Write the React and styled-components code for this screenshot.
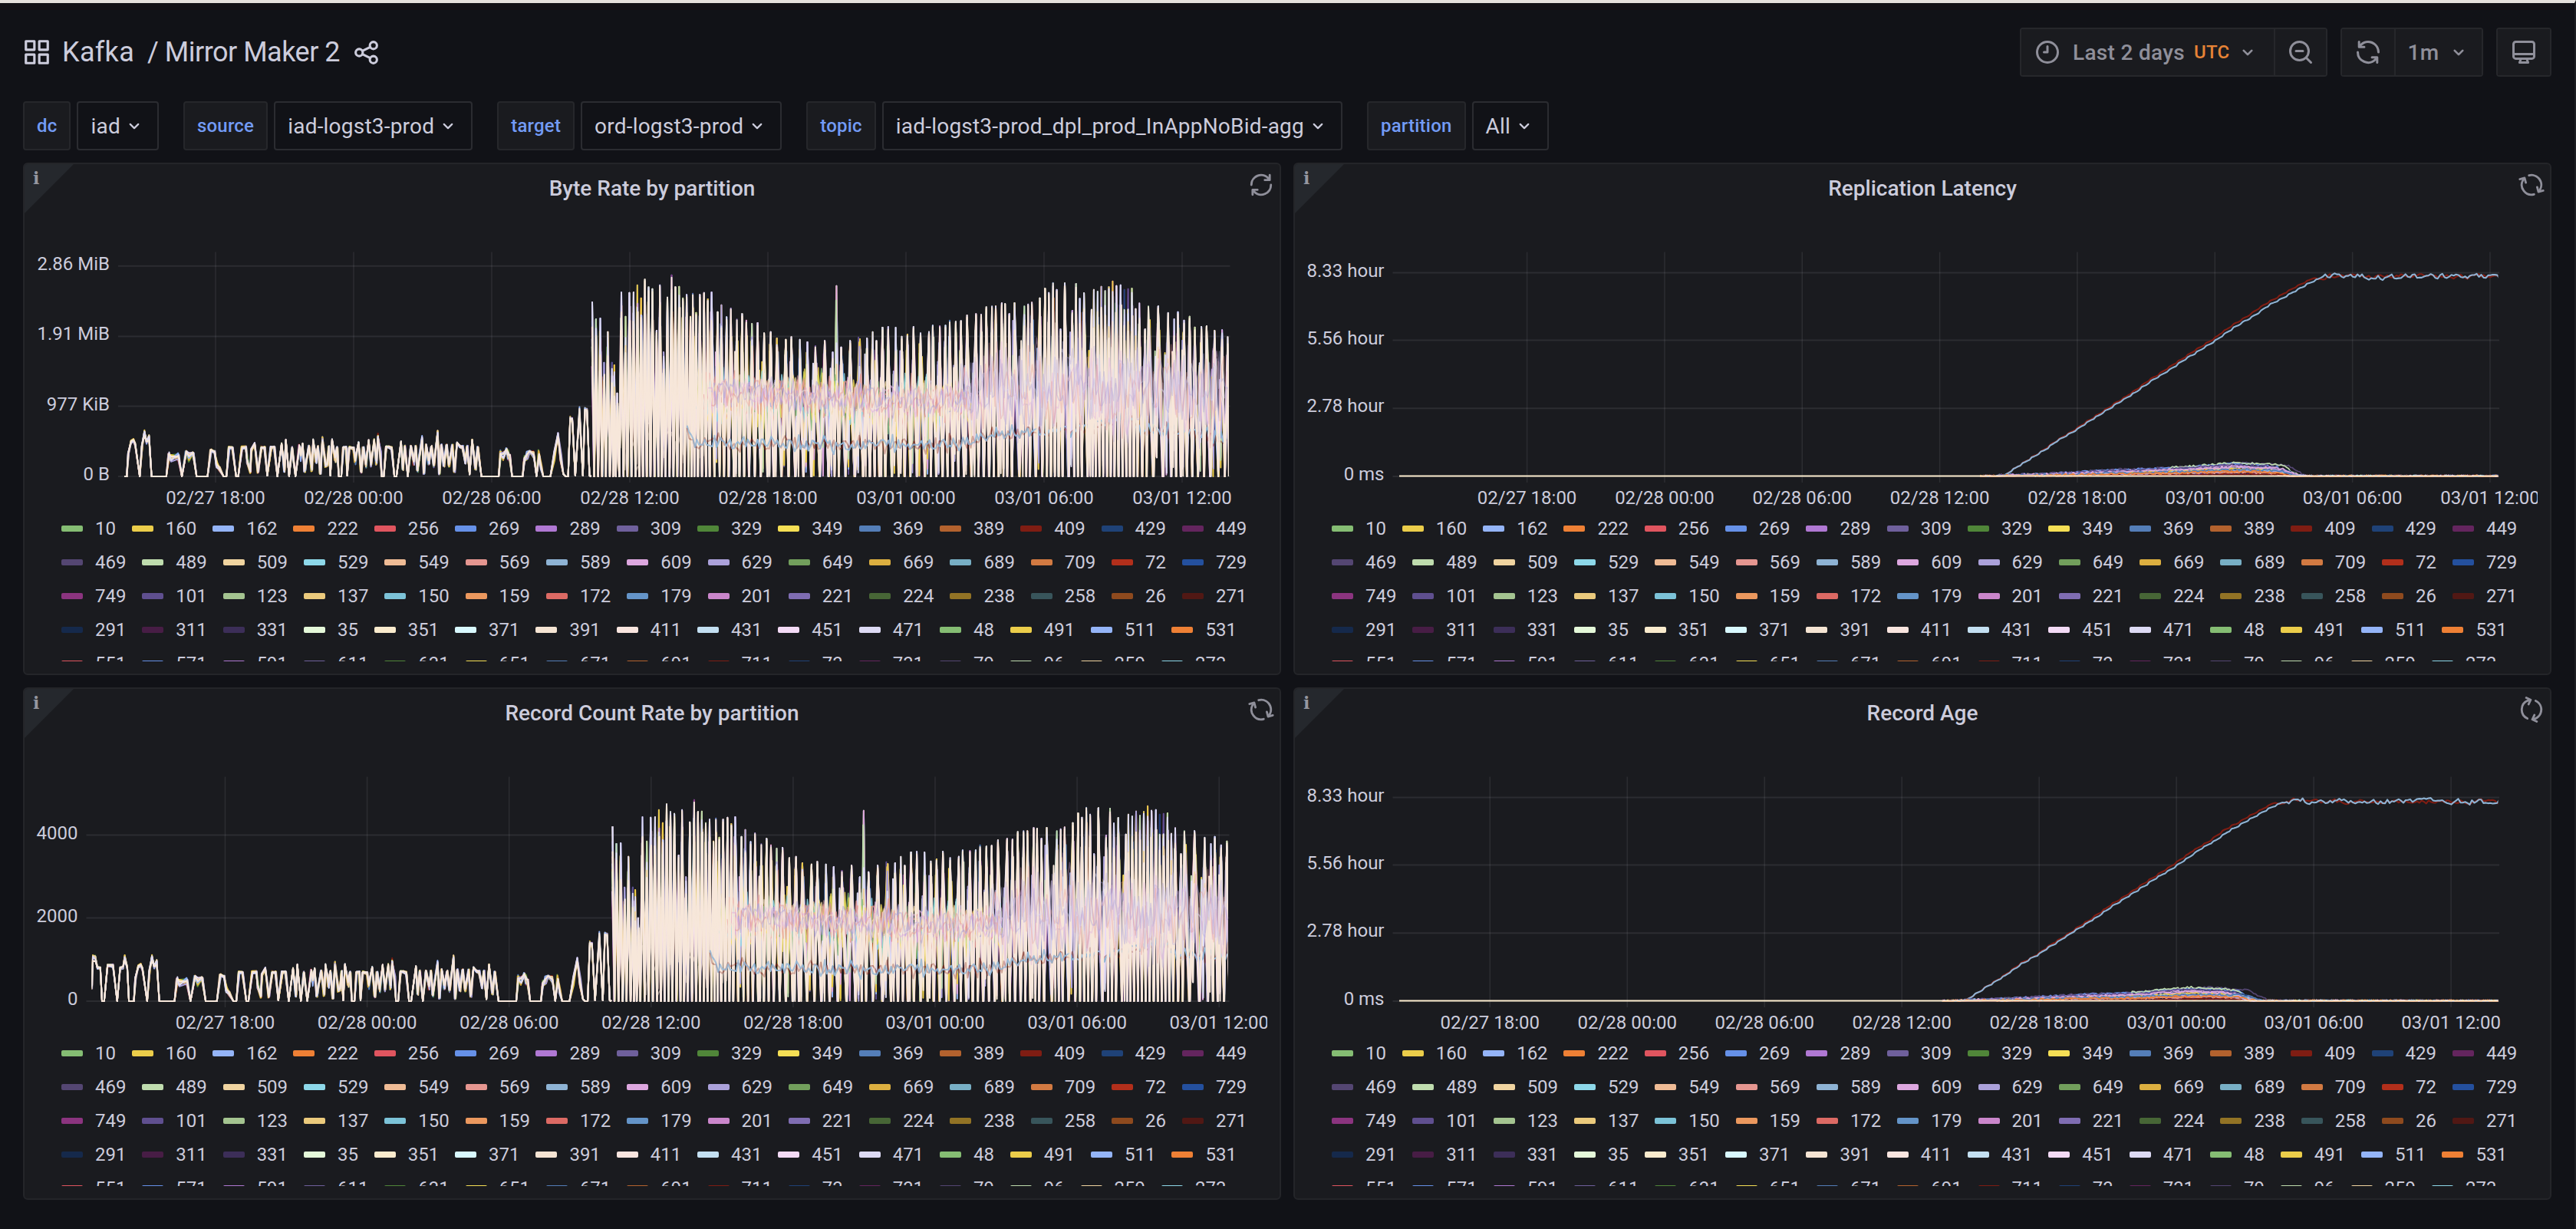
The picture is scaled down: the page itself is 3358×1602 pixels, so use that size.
import React from "react";
import styled, { createGlobalStyle, css } from "styled-components";

const GlobalStyle = createGlobalStyle`
  * { box-sizing: border-box; }
  body {
    margin: 0;
    background: #111217;
    color: #ccccdc;
    font-family: Roboto, "Liberation Sans", sans-serif;
    -webkit-font-smoothing: antialiased;
  }
`;

/* ---------- layout ---------- */

const Page = styled.div`
  width: 3358px;
  height: 1602px;
  overflow: hidden;
  background: #111217;
  border-top: 4px solid #e4e2de;
  border-right: 2px solid #1d1e22;
  padding: 32px 30px 0;
`;

const NavBar = styled.header`
  display: flex;
  align-items: center;
  justify-content: space-between;
  height: 64px;
`;

const Title = styled.h1`
  display: flex;
  align-items: center;
  margin: 0 0 0 -1px;
  font-size: 36px;
  font-weight: 400;
  line-height: 64px;
  white-space: pre;
  color: #ccccdc;
`;

const Crumb = styled.span`
  margin-left: ${(p) => p.$gap}px;
  letter-spacing: ${(p) => p.$track}px;
`;

const Toolbar = styled.div`
  display: flex;
  gap: 17px;
`;

const ButtonGroup = styled.div`
  display: flex;
  border: 2px solid #26272b;
  border-radius: 4px;
  overflow: hidden;
`;

const ToolButton = styled.button`
  display: flex;
  align-items: center;
  justify-content: ${(p) => (p.$start ? "flex-start" : "center")};
  width: ${(p) => p.$width}px;
  height: 60px;
  padding: ${(p) => (p.$start ? "0 0 0 16px" : "0")};
  border: 0;
  background: #1a1b1f;
  color: #8f8f9a;
  font: 500 28px Roboto, "Liberation Sans", sans-serif;
  letter-spacing: 0.3px;
  & + & {
    border-left: 2px solid #26272b;
  }
`;

const RangeText = styled.span`
  margin-left: 15px;
`;

const Zone = styled.span`
  margin: 0 10px 0 12px;
  font-size: 24px;
  color: #e68336;
`;

const IntervalText = styled.span`
  margin-right: 12px;
`;

const Variables = styled.div`
  display: flex;
  gap: 32px;
  margin: 32px 0 16px;
  letter-spacing: 0.21px;
`;

const Variable = styled.div`
  display: flex;
  gap: 8px;
`;

const VarLabel = styled.label`
  display: flex;
  align-items: center;
  height: 64px;
  padding: 0 16px;
  border: 2px solid #26272b;
  border-radius: 4px;
  background: #1a1b1f;
  color: #739bf5;
  font-size: 24px;
  font-weight: 500;
`;

const VarValue = styled.div`
  display: flex;
  align-items: center;
  gap: 4px;
  height: 64px;
  padding: 0 16px;
  border: 2px solid #2b2c31;
  border-radius: 4px;
  font-size: 28px;
`;

const Grid = styled.main`
  display: grid;
  grid-template-columns: 1640px 1640px;
  grid-auto-rows: 668px;
  gap: 16px;
`;

const PanelBox = styled.section`
  position: relative;
  display: flex;
  flex-direction: column;
  background: #1a1b1f;
  border: 2px solid #242529;
  border-radius: 6px;
  overflow: hidden;
`;

const PanelTitle = styled.h2`
  margin: 0;
  height: 58px;
  line-height: 63px;
  text-align: center;
  font-size: 28px;
  font-weight: 500;
  color: #ccccdc;
`;

const InfoCorner = styled.div`
  position: absolute;
  top: 0;
  left: 0;
  width: 64px;
  height: 64px;
  background: #25282d;
  clip-path: polygon(0 0, 100% 0, 0 100%);
`;

const InfoMark = styled.span`
  position: absolute;
  top: 5px;
  left: 11px;
  font: 700 22px/26px "DejaVu Serif", serif;
  color: #9697a0;
`;

const Spinner = styled.div`
  position: absolute;
  top: 10px;
  right: 7px;
  width: 34px;
  height: 34px;
  color: #8f8f9a;
  ${(p) => css`
    transform: rotate(${p.$angle}deg);
  `}
`;

const Plot = styled.svg`
  display: block;
  flex: none;
  margin-left: 14px;
  width: 1606px;
  height: 395px;
  overflow: hidden;
`;

const Legend = styled.ul`
  display: flex;
  flex-wrap: wrap;
  align-content: flex-start;
  margin: 0;
  padding: 0 0 0 48px;
  width: 1625px;
  height: 195px;
  overflow: hidden;
  list-style: none;
`;

const LegendItem = styled.li`
  display: flex;
  align-items: center;
  height: 44px;
  padding-right: 20.85px;
  gap: 16px;
  font-size: 24px;
  line-height: 44px;
`;

const Swatch = styled.span`
  width: 28px;
  height: 8px;
  border-radius: 2px;
  background: ${(p) => p.$color};
`;

const Svg = styled.svg`
  display: block;
  flex: none;
  fill: none;
  stroke: currentColor;
  stroke-width: ${(p) => p.$weight || 2};
  margin-left: ${(p) => p.$gap || 0}px;
  stroke-linecap: round;
  stroke-linejoin: round;
`;

/* ---------- icons ---------- */

const Icon = ({ size = 36, weight, gap, children }) => (
  <Svg width={size} height={size} viewBox="0 0 24 24" $weight={weight} $gap={gap}>
    {children}
  </Svg>
);

const AppsIcon = () => (
  <Icon size={38}>
    <rect x="3" y="3" width="7" height="7" />
    <rect x="14" y="3" width="7" height="7" />
    <rect x="3" y="14" width="7" height="7" />
    <rect x="14" y="14" width="7" height="7" />
  </Icon>
);

const ShareIcon = () => (
  <Icon size={37} gap={16}>
    <circle cx="18" cy="6" r="3" />
    <circle cx="18" cy="18" r="3" />
    <circle cx="6" cy="12" r="3" />
    <path d="M8.7 10.6l6.6-3.2M8.7 13.4l6.6 3.2" />
  </Icon>
);

const ClockIcon = () => (
  <Icon>
    <circle cx="12" cy="12" r="9" />
    <path d="M12 7v5H9" />
  </Icon>
);

const ZoomOutIcon = () => (
  <Icon>
    <circle cx="11" cy="11" r="8" />
    <path d="M17 17l4 4M8 11h6" />
  </Icon>
);

const SYNC_PATH =
  "M19.91,15.51H15.38a1,1,0,0,0,0,2h2.4A8,8,0,0,1,4,12a1,1,0,0,0-2,0,10,10,0,0,0,16.88,7.23V21a1,1,0,0,0,2,0V16.5A1,1,0,0,0,19.91,15.51ZM12,2A10,10,0,0,0,5.12,4.77V3a1,1,0,0,0-2,0V7.5a1,1,0,0,0,1,1h4.5a1,1,0,0,0,0-2H6.22A8,8,0,0,1,20,12a1,1,0,0,0,2,0A10,10,0,0,0,12,2Z";

const SyncIcon = ({ size = 36, mirrored }) => (
  <Icon size={size}>
    <path
      d={SYNC_PATH}
      fill="currentColor"
      stroke="none"
      transform={mirrored ? "translate(24 0) scale(-1 1)" : undefined}
    />
  </Icon>
);

const MonitorIcon = () => (
  <Icon>
    <rect x="3" y="3" width="18" height="14.6" rx="2" />
    <path d="M3 13.6h18M9.5 17.8L8.3 21h7.4l-1.2-3.2" />
  </Icon>
);

const Chevron = ({ bold }) => (
  <Icon size={28} weight={bold ? 2.3 : 1.9}>
    <path d="M7.5 10.2l4.5 4.5 4.5-4.5" />
  </Icon>
);

/* ---------- series ---------- */

const PALETTE = [
  "#85bd73", "#ebcd4a", "#94b4f7", "#ee8035", "#e0555f", "#6691e8", "#b078d3", "#6f609c",
  "#508639", "#f5df55", "#547eb8", "#b3622e", "#7f1d13", "#1f4277", "#64255e",
  "#544672", "#bfdcae", "#f0d4a0", "#8dd8e9", "#efbb95", "#e59690", "#8eb3d4", "#dda7df",
  "#aba1da", "#729f5c", "#dcaf40", "#78afc5", "#d27a42", "#b22f1b", "#24509e",
  "#8b347f", "#5f4f8f", "#a4c490", "#ebca7c", "#7cc3d8", "#eb985e", "#dc6a64", "#6494c8",
  "#ca86cb", "#7f6db2", "#476636", "#927325", "#38555b", "#8e4a1e", "#511814",
  "#15294b", "#471d45", "#3c2e58", "#e4f8d9", "#faebcd", "#d8f8fe", "#f5e4d3", "#f9e5df",
  "#c3dff1", "#f3daf5", "#dddaf4",
];

const PARTITIONS = (
  "10 160 162 222 256 269 289 309 329 349 369 389 409 429 449 " +
  "469 489 509 529 549 569 589 609 629 649 669 689 709 72 729 " +
  "749 101 123 137 150 159 172 179 201 221 224 238 258 26 271 " +
  "291 311 331 35 351 371 391 411 431 451 471 48 491 511 531 " +
  "551 571 591 611 631 651 671 691 711 73 731 79 96 259 273"
).split(" ");

const rng = (seed) => () => {
  seed = (seed + 0x6d2b79f5) | 0;
  let t = Math.imul(seed ^ (seed >>> 15), 1 | seed);
  t = (t + Math.imul(t ^ (t >>> 7), 61 | t)) ^ t;
  return ((t ^ (t >>> 14)) >>> 0) / 4294967296;
};

const pairs = (text) =>
  text
    .trim()
    .split(/\s+/)
    .map((p) => p.split(",").map(Number));

// Hours are counted from 02/28 12:00; heights are in plot pixels.
const FIRST_HOURS = pairs(`219,800 222,700 228,702 233,735 240,735 244,843 249,843 257,728
  270,728 280,843 287,735 294,733 298,700 304,735 308,843 320,843`).map(([x, y]) => [
  (x / 1.8233 - 849.6) / 30.85,
  (843 - y) / 2.4424,
]);

const QUIET = pairs(`302,1023 306,930 312,885 318,880 322,895 333,1023 338,900 344,847 349,888
  355,865 361,1023 396,1023 402,935 407,945 425,945 433,1023 443,925 450,945 460,930 468,1023
  494,1023 502,918 511,925 516,975 522,990 532,1023 539,1023 545,908 553,908 562,1023 567,1023
  576,908 585,908 588,960 596,1005 598,915 606,895 614,1005 622,908 630,908 636,1020 645,908
  653,908 660,1023 670,893 676,1000 680,880 688,1022 695,910 703,1022 712,900 716,940 720,895
  725,1000 735,905 742,995 745,880 752,950 756,905 762,1010 767,872 775,975 779,975 782,905
  786,1020 790,880 797,950 802,908 806,1023 812,1023 817,908 823,908 826,1020 831,908 841,910
  845,960 853,890 859,1005 864,910 870,975 877,880 883,970 890,880 895,960 899,860 905,940
  908,1023 913,1023 918,905 925,905 932,910 938,1023 943,1023 954,885 958,990 963,905 970,1023
  978,905 984,965 989,905 993,1000 1004,867 1008,1010 1014,900 1020,960 1026,905 1032,975
  1041,848 1045,1012 1050,900 1056,970 1062,900 1068,975 1076,900 1081,1000 1087,890 1095,905
  1100,905 1107,960 1111,905 1117,1015 1123,880 1131,990 1136,908 1145,1023 1186,1023 1190,935
  1197,935 1205,915 1208,938 1213,938 1218,1023 1243,1023 1247,950 1254,935 1260,925 1270,940
  1276,1022 1282,935 1287,985 1292,1023 1309,1023 1318,940 1327,852 1334,950 1340,1015 1345,1023
  1351,1023 1356,795 1361,800 1368,1020 1378,758 1386,1020 1391,762 1396,765 1402,1020 1406,1023`).map(
  ([x, y]) => [(x / 1.8233 - 821.4) / 30, (1023 - y) / 3]
);

const PEAKS = pairs(`53,222 61,290 70,287 78,460 86,340 95,460 100,470 106,580 115,185 124,280 132,187
  141,185 149,157 157,208 165,135 173,165 181,172 190,335 197,157 205,420 213,205 222,118 230,165
  238,163 246,208 254,195 262,280 267,190 274,265 282,195 291,187 299,212 307,185 320,262 328,235
  339,282 348,248 361,290 372,270 381,295 393,308 405,305 419,345 433,340 446,365 465,370 477,360
  495,370 511,380 528,395 548,375 565,420 573,160 583,400 602,375 622,292 638,365 650,340 658,375
  671,323 683,320 699,323 712,358 724,350 737,320 752,345 770,340 778,315 793,318 805,315 814,295
  827,300 838,297 851,275 870,270 881,272 892,243 904,240 912,240 925,228 932,230 941,270 952,227
  973,240 981,232 989,225 1006,208 1017,170 1025,187 1034,148 1042,175 1050,330 1059,150 1075,257
  1083,152 1091,210 1100,188 1116,253 1121,175 1129,182 1137,163 1145,180 1153,165 1161,142
  1169,160 1178,157 1186,175 1194,172 1202,170 1210,250 1218,228 1230,330 1237,240 1258,240
  1279,265 1292,290 1300,262 1313,295 1325,280 1336,322 1350,320 1361,318 1378,335 1394,333
  1406,360`).map(([x, y]) => [(x / 1.6333 - 81.4) / 30, (905 - y) / 3, x]);

const LOW_TREND = pairs(`255,720 268,775 300,772 500,782 800,778 860,760 900,750 1000,730 1080,728 1140,700
  1160,690 1200,682 1220,725 1300,725 1400,765 1407,780`).map(([x, y]) => [
  (x / 1.6333 - 81.4) / 30,
  (905 - y) / 3,
]);

const at = (points, t) => {
  if (t <= points[0][0]) return points[0][1];
  for (let i = 1; i < points.length; i++) {
    if (t <= points[i][0]) {
      const [a, b] = [points[i - 1], points[i]];
      return a[1] + ((b[1] - a[1]) * (t - a[0])) / (b[0] - a[0]);
    }
  }
  return points[points.length - 1][1];
};

const T1 = PEAKS[PEAKS.length - 1][0];
const hourOf = (x) => (x / 1.6333 - 81.4) / 30;

const buildRates = () => {
  const out = [];
  const early = [...FIRST_HOURS, ...QUIET];

  // quiet day: the same curve per partition with small deviations
  ["#7f1d13", "#8b347f", "#508639", "#547eb8", "#dcaf40", "#ebcd4a", "#94b4f7", "#aba1da", "#f0d4a0", "#dddaf4"].forEach(
    (color, k) => {
      const r = rng(100 + k);
      out.push({
        color,
        points: early.map(([t, h]) => [
          t + (h > 3 && h < 42 ? (r() - 0.5) * 0.06 : 0),
          h < 3 ? h : Math.max(0, h * (h < 30 ? 0.7 + r() * 0.5 : 0.93 + r() * 0.1)),
        ]),
      });
    }
  );
  out.push({ color: "#f7e7da", points: early.map(([t, h]) => [t, h > 48 && h < 62 ? h * 0.9 : h]) });

  // busy period: coloured partitions behind
  const back = [
    "#15294b", "#64255e", "#1f4277", "#8b347f", "#ee8035", "#508639", "#547eb8", "#8b347f",
    "#1f4277", "#5f4f8f", "#ebcd4a", "#94b4f7", "#ebcd4a", "#dda7df", "#ebcd4a", "#aba1da", "#bfdcae",
  ];
  back.forEach((color, k) => {
    const r = rng(500 + k);
    const points = [];
    PEAKS.forEach(([t, h], i) => {
      const gap = i < PEAKS.length - 1 ? PEAKS[i + 1][0] - t : 0.2;
      const full = r() < 0.22;
      points.push([t + (full ? 0 : (r() - 0.5) * gap * 0.35), h * (full ? 1 : 0.6 + r() * 0.33)]);
      points.push([t + gap * (0.42 + r() * 0.16), r() < 0.6 ? 0 : h * r() * 0.3]);
      if (gap > 0.25 && k > 8 && r() < 0.7) {
        points.push([t + gap * 0.68, h * (0.35 + r() * 0.4)]);
        points.push([t + gap * 0.82, h * r() * 0.3]);
      }
    });
    out.push({ color, points });
  });

  // pale bodies
  const bodies = [["#aba1da", 0.93], ["#dddaf4", 1], ["#f0d4a0", 0.84], ["#f3daf5", 0.7]];
  bodies.forEach(([color, f], k) => {
    const r = rng(900 + k);
    const points = [];
    PEAKS.forEach(([t, h, x], i) => {
      const gap = i < PEAKS.length - 1 ? PEAKS[i + 1][0] - t : 0.2;
      const spike = x === 573 || x === 622;
      const pale = k === 1 && r() < 0.6;
      points.push([t, h * f * (spike ? 0.7 : pale ? 1 : 0.84 + r() * 0.16)]);
      points.push([t + gap * (0.4 + 0.2 * r()), r() < 0.65 ? 0 : r() * 0.3 * h]);
      if (gap > 0.26 && k < 2 && r() < 0.5) {
        points.push([t + gap * 0.72, h * (0.45 + r() * 0.4)]);
        points.push([t + gap * 0.86, h * r() * 0.3]);
      }
    });
    out.push({ color, points });
  });

  const lagging = (until, opacity) =>
    ["#7f1d13", "#8eb3d4"].forEach((color, k) => {
      const r = rng(40 + k);
      const points = [];
      for (let t = hourOf(255); t < until; t += 0.085) {
        points.push([t, at(LOW_TREND, t) + (r() - 0.5) * (r() < 0.25 ? 26 : 13)]);
      }
      out.push({ color, points, opacity: k === 0 ? opacity * 0.4 : opacity });
    });

  const front = (seed, exact) => {
    const r = rng(seed);
    const points = [];
    PEAKS.forEach(([t, h, x], i) => {
      const gap = i < PEAKS.length - 1 ? PEAKS[i + 1][0] - t : 0.1;
      const spike = x === 573 || x === 622;
      const low = exact || r() < 0.65 ? 0 : r() * 0.25 * h;
      const lavender = x < 160 || (x > 1118 && x < 1215);
      if (exact) {
        const cut = lavender ? 0.7 + r() * 0.2 : r() < 0.25 ? 0.82 + r() * 0.14 : 0.98 + r() * 0.02;
        points.push([t, spike ? h * 0.5 : h * cut]);
      } else {
        points.push([t + (r() - 0.5) * 0.07, spike ? h * 0.45 : h * (0.6 + r() * 0.3)]);
      }
      points.push([t + gap * 0.5, low]);
      if (gap > 0.26 && !exact && r() < 0.6) {
        points.push([t + gap * 0.68, h * (0.3 + r() * 0.5)]);
        points.push([t + gap * 0.84, low]);
      }
    });
    out.push({ color: "#f7e7da", points });
  };

  const band = (colors, seed, from, to, mid, amp, opacity) =>
    colors.forEach((color, k) => {
      const r = rng(seed + k);
      const points = [];
      for (let t = hourOf(from + k * 7); t < hourOf(to); t += 0.085) {
        const m = typeof mid === "function" ? mid(t) : mid;
        points.push([t, m + (r() - 0.5) * amp * (0.5 + r() * 0.9)]);
      }
      out.push({ color, points, width: 1.6, opacity });
    });

  const drift = (t) => 104 + 5 * Math.sin(t / 2.6);

  lagging(T1, 1);
  band(["#85bd73", "#8dd8e9", "#f5df55", "#e59690"], 1500, 262, 860, (t) => drift(t) - 4, 66, 0.8);
  front(2101, false);
  // mottled band around the mean
  band(["#e59690", "#dda7df", "#aba1da", "#f0d4a0"], 1510, 290, 860, drift, 44, 0.75);
  front(2102, true);
  band(["#dda7df", "#e59690", "#aba1da", "#f7e7da"], 1530, 300, 860, drift, 38, 0.5);
  // the partitions drift apart afterwards
  band(["#aba1da", "#dda7df", "#e59690"], 1600, 830, 1406, 112, 110, 0.35);
  band(["#aba1da", "#dddaf4"], 1620, 830, 1406, 118, 80, 0.4);
  // early spikes overlap into a pale body
  band(["#f7e7da", "#f7e7da"], 1650, 106, 300, 72, 110, 0.5);
  lagging(hourOf(1000), 0.75);
  return out;
};

const LAG = pairs(`205,837 222,820 260,785 300,750 340,710 380,678 420,640 470,595 520,550 560,510 600,475
  650,428 710,375 760,325 800,292 840,252 870,230 900,205 930,182 950,168 965,157 1000,153 1060,155
  1110,162 1150,155 1382,158 1600,157`).map(([x, y]) => [(x / 1.8275 - 29.5) / 29.89, (837 - y) / 2.6133]);

const HUMP = pairs(`150,0 205,4 300,9 380,15 450,22 550,27 640,33 700,40 765,47 820,43 850,41 875,34 893,16 915,2
  960,2 1600,2`).map(([x, y]) => [(x / 1.8275 - 29.5) / 29.89, y / 2.6133]);

const buildLatency = (seed) => {
  const out = [];
  const start = LAG[0][0];
  const flat = LAG[20][0];
  [["#7f1d13", 0.3], ["#8eb3d4", 0]].forEach(([color, lead], k) => {
    const r = rng(seed + k);
    const points = [[start, 0]];
    let n = 0;
    let i = 0;
    for (let t = start + 0.05; t < 27; t += 0.1) {
      const late = t > flat - lead;
      n = n * 0.4 + (r() - 0.5) * (late ? 6.6 : 0.7);
      const shift = late ? 0 : lead * ((t - start) / 13.5);
      const saw = late ? 0 : (i++ % 4) * 0.5 - 0.7;
      const level = late ? Math.max(at(LAG, t), at(LAG, flat)) : at(LAG, t + shift);
      points.push([t, Math.max(0, level + (k === 0 && late ? n * 0.8 : n) - saw)]);
    }
    out.push({ color, points, width: 2.1 });
  });

  const colors = [
    "#544672", "#6691e8", "#bfdcae", "#b3622e", "#1f4277", "#dda7df", "#aba1da", "#64255e", "#ebcd4a", "#5f4f8f",
    "#ee8035", "#8dd8e9", "#e59690", "#7f1d13", "#aba1da", "#dda7df", "#547eb8", "#ee8035",
  ];
  const factors = [1, 0.94, 1, 0.6, 0.75, 0.76, 0.62, 0.2, 0.56, 0.85, 0.32, 0.45, 0.3, 0.15, 0.42, 0.7, 0.5, 0.36];
  colors.forEach((color, k) => {
    const r = rng(seed + 60 + k);
    const points = [];
    const stretch = k === 0 ? 0.25 : (r() - 0.8) * 0.7;
    for (let t = LAG[0][0] - 1; t < 27; t += 0.083) {
      const h = at(HUMP, t - (t > 11 ? stretch : 0));
      const f = k === 2 && t < 10 ? 0.7 : factors[k];
      const noise = h > 3 ? (r() - 0.5) * 2.6 : r() < 0.12 ? 1.5 : 0;
      points.push([t, Math.max(0, (h > 1.2 ? h * f : 0) + noise)]);
    }
    out.push({ color, points, width: 1.7 });
  });
  out.push({ color: "#faebcd", points: [[-40, 0.6], [40, 0.6]] });
  return out;
};

const TICKS = [
  ["02/27 18:00", -18],
  ["02/28 00:00", -12],
  ["02/28 06:00", -6],
  ["02/28 12:00", 0],
  ["02/28 18:00", 6],
  ["03/01 00:00", 12],
  ["03/01 06:00", 18],
  ["03/01 12:00", 24],
];

const Chart = ({ id, axis, rows, noon, perHour, dataLeft, series, right = 1556 }) => {
  const base = rows[rows.length - 1][1];
  const x = (t) => noon + t * perHour;
  return (
    <Plot viewBox="0 0 1606 395">
      <defs>
        <clipPath id={id}>
          <rect x={dataLeft} y="40" width={right - dataLeft} height="330" />
        </clipPath>
      </defs>
      <g stroke="#ccccdc" strokeOpacity="0.1" strokeWidth="2">
        {rows.map(([label, y]) => (
          <path key={label} d={`M${axis + 11} ${y}H${right + 1.5}`} />
        ))}
      </g>
      <g stroke="#ccccdc" strokeOpacity="0.1" strokeWidth="1.5">
        {TICKS.map(([label, t]) => (
          <path key={label} d={`M${x(t)} 56.5V357`} />
        ))}
      </g>
      <g clipPath={`url(#${id})`} fill="none" strokeLinejoin="round">
        {series.map((s, i) => (
          <polyline
            key={i}
            stroke={s.color}
            strokeWidth={s.width || 2}
            strokeOpacity={s.opacity || 1}
            points={s.points.map(([t, h]) => `${x(t).toFixed(1)},${(base - h).toFixed(1)}`).join(" ")}
          />
        ))}
      </g>
      <g fill="#ccccdc" fontSize="24" fontFamily='Roboto, "Liberation Sans", sans-serif'>
        {rows.map(([label, y]) => (
          <text key={label} x={axis} y={y + 5} textAnchor="end">
            {label}
          </text>
        ))}
        {TICKS.map(([label, t]) => (
          <text key={label} x={x(t)} y="385" textAnchor="middle">
            {label}
          </text>
        ))}
      </g>
    </Plot>
  );
};

const RATES = buildRates();
const HOURS = [["8.33 hour", 83.5], ["5.56 hour", 171.5], ["2.78 hour", 260.3], ["0 ms", 349]];

const PANELS = [
  {
    title: "Byte Rate by partition",
    angle: 0,
    chart: {
      id: "bytes",
      axis: 97,
      rows: [["2.86 MiB", 74.8], ["1.91 MiB", 166.4], ["977 KiB", 257.6], ["0 B", 349]],
      noon: 775,
      perHour: 30,
      dataLeft: 116,
      series: RATES,
    },
  },
  {
    title: "Replication Latency",
    angle: 75,
    chart: {
      id: "latency", axis: 102.5, rows: HOURS, noon: 826.6, perHour: 29.89, dataLeft: 122, right: 1554.5,
      series: buildLatency(7),
    },
  },
  {
    title: "Record Count Rate by partition",
    angle: 75,
    chart: {
      id: "records",
      axis: 55.5,
      rows: [["4000", 132.6], ["2000", 240.6], ["0", 349]],
      noon: 802.8,
      perHour: 30.85,
      dataLeft: 73.5,
      right: 1555,
      series: RATES,
    },
  },
  {
    title: "Record Age",
    angle: 115,
    chart: {
      id: "age", axis: 102.5, rows: HOURS, noon: 777.2, perHour: 29.83, dataLeft: 122, right: 1554.5,
      series: buildLatency(31),
    },
  },
];

const Panel = ({ title, angle, chart }) => (
  <PanelBox>
    <InfoCorner>
      <InfoMark>i</InfoMark>
    </InfoCorner>
    <Spinner $angle={angle}>
      <SyncIcon size={34} mirrored />
    </Spinner>
    <PanelTitle>{title}</PanelTitle>
    <Chart {...chart} />
    <Legend>
      {PARTITIONS.map((name, i) => (
        <LegendItem key={name}>
          <Swatch $color={PALETTE[i % PALETTE.length]} />
          {name}
        </LegendItem>
      ))}
    </Legend>
  </PanelBox>
);

const VARIABLES = [
  ["dc", "iad"],
  ["source", "iad-logst3-prod"],
  ["target", "ord-logst3-prod"],
  ["topic", "iad-logst3-prod_dpl_prod_InAppNoBid-agg"],
  ["partition", "All"],
];

export default function App() {
  return (
    <Page>
      <GlobalStyle />
      <NavBar>
        <Title>
          <AppsIcon />
          <Crumb $gap={14} $track={0.3}>Kafka</Crumb>
          <Crumb $gap={17} $track={-0.5}>/ Mirror Maker 2</Crumb>
          <ShareIcon />
        </Title>
        <Toolbar>
          <ButtonGroup>
            <ToolButton $start $width={329}>
              <ClockIcon />
              <RangeText>Last 2 days</RangeText>
              <Zone>UTC</Zone>
              <Chevron bold />
            </ToolButton>
            <ToolButton $width={68}>
              <ZoomOutIcon />
            </ToolButton>
          </ButtonGroup>
          <ButtonGroup>
            <ToolButton $width={68}>
              <SyncIcon />
            </ToolButton>
            <ToolButton $width={114}>
              <IntervalText>1m</IntervalText>
              <Chevron bold />
            </ToolButton>
          </ButtonGroup>
          <ButtonGroup>
            <ToolButton $width={68}>
              <MonitorIcon />
            </ToolButton>
          </ButtonGroup>
        </Toolbar>
      </NavBar>
      <Variables>
        {VARIABLES.map(([label, value]) => (
          <Variable key={label}>
            <VarLabel>{label}</VarLabel>
            <VarValue>
              {value}
              <Chevron />
            </VarValue>
          </Variable>
        ))}
      </Variables>
      <Grid>
        {PANELS.map((p) => (
          <Panel key={p.title} {...p} />
        ))}
      </Grid>
    </Page>
  );
}
